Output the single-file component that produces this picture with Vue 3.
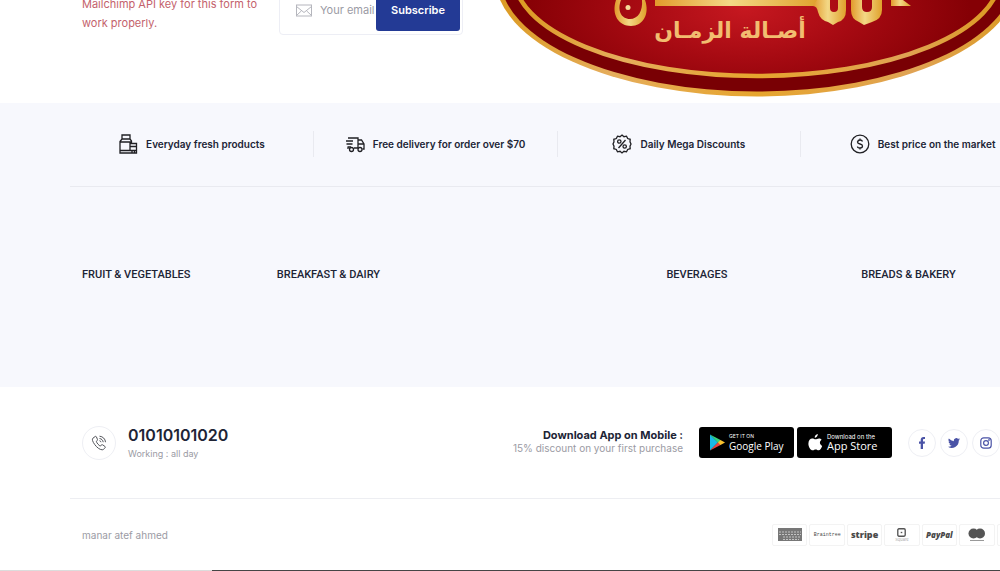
<template>
  <div class="page">
    <section class="newsletter">
      <div class="container newsletter__row">
        <p class="newsletter__error">Mailchimp API key for this form to work properly.</p>
        <form class="newsletter__form" @submit.prevent="subscribe">
          <svg class="newsletter__icon" viewBox="0 0 16 13" fill="none" stroke="#b5b6bd">
            <rect x="0.5" y="1" width="15" height="11" />
            <path d="M.5 2.5 8 8.5l7.500-6M.5 11.500 5.500 6.800M15.500 11.500l-5-4.700" />
          </svg>
          <input id="email" v-model="email" type="email" placeholder="Your email" aria-label="Your email" />
          <button type="submit">Subscribe</button>
        </form>
      </div>
      <svg class="logo" viewBox="0 0 524 97" role="img">
        <defs>
          <radialGradient id="red" gradientUnits="userSpaceOnUse" cx="250" cy="20" r="225" gradientTransform="matrix(1 0 0 .45 0 0)">
            <stop offset="0" stop-color="#c61820" />
            <stop offset="0.500" stop-color="#a60a12" />
            <stop offset="1" stop-color="#850005" />
          </radialGradient>
          <linearGradient id="rim" x1="0" x2="1">
            <stop offset="0" stop-color="#dc9a20" />
            <stop offset="0.220" stop-color="#e5ad5c" />
            <stop offset="0.500" stop-color="#e6a52e" />
            <stop offset="0.800" stop-color="#e0a354" />
            <stop offset="1" stop-color="#dc9a20" />
          </linearGradient>
          <linearGradient id="gold" x1="0" x2="1">
            <stop offset="0" stop-color="#e29a2c" />
            <stop offset="0.450" stop-color="#f3d886" />
            <stop offset="1" stop-color="#dfa02b" />
          </linearGradient>
        </defs>
        <ellipse cx="262" cy="-23.500" rx="262" ry="120" fill="url(#rim)" />
        <ellipse cx="262" cy="-23.500" rx="257" ry="115" fill="#790004" />
        <ellipse cx="262" cy="-23.500" rx="243" ry="99.500" fill="url(#red)" stroke="url(#rim)" stroke-width="4.500" />
        <path fill="url(#gold)" fill-rule="evenodd" d="M121 0c-5 15 3 26 15 26 12 0 19-12 14-26h-3c1 11-4 19-12 19-9 0-13-9-9-19z" />
        <circle cx="133" cy="7.500" r="2.500" fill="#f5d999" />
        <path fill="url(#gold)" d="M160 0v6h166v-6z" />
        <path fill="url(#gold)" d="M318 6 322 0h13v8q0 4 4 4t4-4V0h8v10q0 10-8 12l-5 3-5-3q-8-2-10-10-1-6-5-6z" />
        <path fill="url(#gold)" d="M356 0h11v7q0 5 5 5t5-5V0h10v10q0 9-10 12l-8 3-5-3q-8-3-8-12z" />
        <path fill="url(#gold)" d="M396 0h12l8 6h-20z" />
        <text x="235" y="38" direction="rtl" text-anchor="middle" fill="#f2bd70">أصـالة الزمـان</text>
      </svg>
    </section>

    <section class="catalog">
      <div class="container">
        <ul class="features">
          <li>
            <svg viewBox="0 0 20 20">
              <path d="M4 1h8v4H4zM4 5 2 7.500V19h16.500V9.500H12V17M12 5l1.500 2v2.500M2 8h11M2 16.500h16.500M12 12.500h6.500M14 17v2M16.500 17v2" />
            </svg>
            Everyday fresh products
          </li>
          <li>
            <svg viewBox="0 0 20 20">
              <path d="M3 4h10v10H9M13 6h3.500L19 10v5h-1.500M13 10h6M1 7h7M1.500 10h6M2.500 13H6M3 13v2" />
              <circle cx="6.500" cy="15.500" r="2" />
              <circle cx="15" cy="15.500" r="2" />
            </svg>
            Free delivery for order over $70
          </li>
          <li>
            <svg viewBox="0 0 20 20">
              <path d="M10 1l2 1.700 2.500-.5 1.200 2.300 2.500.8-.2 2.600L19 10l-1 2.100.2 2.600-2.500.8-1.200 2.300-2.500-.5L10 19l-2-1.700-2.500.5-1.200-2.300-2.500-.8.2-2.600L1 10l1-2.100-.2-2.600 2.500-.8 1.200-2.300 2.500.5zM13.500 6l-7 8" />
              <circle cx="7.300" cy="7.500" r="1.700" />
              <circle cx="12.700" cy="12.500" r="1.700" />
            </svg>
            Daily Mega Discounts
          </li>
          <li>
            <svg viewBox="0 0 20 20">
              <circle cx="10" cy="10" r="8.800" />
              <path d="M12.500 7.500Q12 6 10 6T7.500 8q0 1.500 2.500 2t2.500 2q0 2-2.500 2t-2.500-1.500M10 4.500V6m0 8v1.500" />
            </svg>
            Best price on the market
          </li>
        </ul>
        <div class="categories">
          <h6 v-for="(title, i) in categories" :key="i">{{ title }}</h6>
        </div>
      </div>
    </section>

    <footer class="container">
      <div class="contact">
        <div class="phone">
          <span class="circle circle--phone">
            <svg viewBox="0 0 16 16" fill="none" stroke="#52545a">
              <path d="M4.200 1.500 1.900 3.200C.8 4.200 1.500 6.500 3.700 9.500s5 5.200 7.500 5.300c1 0 2-.9 2.900-2 .4-.5.2-1-.2-1.400l-2.300-1.600c-.5-.3-1-.2-1.400.3l-.8 1c-1.500-.5-3.600-3-4.100-4.700l.9-.8c.5-.4.5-.8.2-1.300L5.400 1.800c-.3-.5-.7-.6-1.200-.3zM8.500 1.200c3.300.2 5.800 2.700 6 6M8.500 3.500c2 .2 3.500 1.700 3.700 3.700M8.500 5.700c.8.1 1.400.7 1.500 1.500" />
            </svg>
          </span>
          <div>
            <h4>01010101020</h4>
            <p>Working : all day</p>
          </div>
        </div>
        <div class="apps">
          <div class="apps__text">
            <h5>Download App on Mobile :</h5>
            <p>15% discount on your first purchase</p>
          </div>
          <div class="stores">
            <a href="#" class="store">
              <svg viewBox="0 0 16 17">
                <path fill="#18b9e6" d="M1 .5v16l8-8z" />
                <path fill="#35d07c" d="M1 .5 12 6.200 9 8.800z" />
                <path fill="#e9443f" d="M1 16.500 12 10.800 9 8.200z" />
                <path fill="#f9c22e" d="M11.500 5.900 16 8.500l-4.500 2.600-2.600-2.600z" />
              </svg>
              <span><small class="get">GET IT ON</small><b class="google">Google Play</b></span>
            </a>
            <a href="#" class="store">
              <svg viewBox="0 0 16 18" fill="#fff">
                <path d="M11 0c.1 2-1.400 3.900-3.300 4C7.400 2 9.200.2 11 0zM15 6.200c-2.700 1.700-2.200 5.200.6 6.400-.7 2-2.200 4.700-3.800 4.700-1.200 0-1.600-.8-3.100-.8s-2 .8-3.100.8C3.300 17.300 1 13.500 1 10.200c0-3.400 2-5.400 4.200-5.400 1.400 0 2.300.8 3.400.8s1.900-.9 3.700-.9c1 0 2.100.5 2.700 1.500z" />
              </svg>
              <span><small>Download on the</small><b>App Store</b></span>
            </a>
          </div>
          <div class="social">
            <a href="#" class="circle" aria-label="Facebook">
              <svg viewBox="0 0 12 12" fill="#4a53a6">
                <path d="M4.700 12V6.700H3V4.600h1.700V3c0-2 1.100-3 2.800-3L9 .1V2h-.9c-.9 0-1.100.5-1.100 1.100v1.500h2l-.3 2.100H7V12z" />
              </svg>
            </a>
            <a href="#" class="circle" aria-label="Twitter">
              <svg viewBox="0 0 24 24" fill="#4a53a6">
                <path d="M24 4.600a10 10 0 0 1-2.800.8 5 5 0 0 0 2.100-2.700 10 10 0 0 1-3.100 1.200 4.900 4.900 0 0 0-8.400 4.500A14 14 0 0 1 1.700 3.200a4.900 4.900 0 0 0 1.500 6.500 5 5 0 0 1-2.200-.6 4.900 4.900 0 0 0 4 4.900 5 5 0 0 1-2.300.1 4.900 4.900 0 0 0 4.600 3.400A10 10 0 0 1 0 19.500a14 14 0 0 0 21.500-12.400A10 10 0 0 0 24 4.600z" />
              </svg>
            </a>
            <a href="#" class="circle" aria-label="Instagram">
              <svg viewBox="0 0 12 12" fill="none" stroke="#4a53a6" stroke-width="1.200">
                <rect x="0.800" y="0.800" width="10.400" height="10.400" rx="3" />
                <circle cx="6" cy="6" r="2.400" />
                <circle cx="9" cy="3" r="0.300" />
              </svg>
            </a>
          </div>
        </div>
      </div>
      <div class="bottom">
        <p>manar atef ahmed</p>
        <div class="payments">
          <span>
            <svg viewBox="0 0 24 14">
              <path fill="#777" d="M0 0h24v13H0z" />
              <path stroke="#c4c4c4" fill="none" stroke-dasharray="2 1" d="M1 4h22M1 6.500h22M5 9h18M5 11.500h16" />
            </svg>
          </span>
          <span class="braintree">Braintree</span>
          <span class="stripe">stripe</span>
          <span class="square">
            <svg viewBox="0 0 8 8" fill="none" stroke="#555" stroke-width="1.200">
              <rect x="0.700" y="0.700" width="6.600" height="6.600" rx="1" />
              <path d="M3.300 4h1.400" />
            </svg>
            Square
          </span>
          <span class="paypal">PayPal</span>
          <span>
            <svg viewBox="0 0 18 14" fill="#555">
              <circle cx="5.500" cy="5.500" r="5" />
              <circle cx="12" cy="5.500" r="5" />
              <path fill="#999" d="M2 12h14v1H2z" />
            </svg>
          </span>
          <span></span>
        </div>
      </div>
    </footer>
    <div class="edge"></div>
  </div>
</template>

<script setup>
import { ref } from 'vue';

const email = ref('');
const categories = ['Fruit & Vegetables', 'Breakfast & Dairy', '', 'Beverages', 'Breads & Bakery'];

const subscribe = () => {
  email.value = '';
};
</script>

<style>
body {
  margin: 0;
  background: #fff;
}
</style>

<style scoped>
.page {
  overflow: hidden;
  font-family: Inter, "Liberation Sans", sans-serif;
  font-size: 11px;
  color: #202435;
}

.page * {
  box-sizing: border-box;
}

h4, h5, h6, p, ul {
  margin: 0;
  padding: 0;
}

a {
  text-decoration: none;
}

.container {
  margin-left: 70px;
  margin-right: -44px;
}

.newsletter {
  position: relative;
  height: 103px;
  overflow: hidden;
}

.newsletter__row {
  display: flex;
  align-items: flex-end;
  height: 100%;
  padding: 0 12px 68px;
}

.newsletter__error {
  width: 197px;
  padding: 0 10px 2px 0;
  font-size: 11px;
  line-height: 19px;
  color: #c4626c;
}

.newsletter__form {
  display: flex;
  align-items: center;
  width: 184px;
  height: 50px;
  padding: 0 2px 0 16px;
  border: 1px solid #edeef5;
  border-radius: 4px;
}

.newsletter__icon {
  flex: none;
  width: 16px;
  height: 13px;
}

.newsletter__form input {
  flex: 1;
  min-width: 0;
  height: 40px;
  padding: 0 0 0 8px;
  border: 0;
  outline: 0;
  background: none;
  font: 11px Inter, sans-serif;
}

.newsletter__form input::placeholder {
  color: #9b9ba4;
}

.newsletter__form button {
  width: 84px;
  height: 42px;
  padding: 0;
  border: 0;
  border-radius: 3px;
  background: #233a95;
  color: #fff;
  font: 600 11px Inter, sans-serif;
}

.logo {
  position: absolute;
  top: 0;
  left: 495px;
  width: 524px;
  height: 97px;
}

.logo text {
  font: bold 22px "DejaVu Sans", sans-serif;
}

.catalog {
  background: #f7f8fd;
}

.features {
  display: flex;
  align-items: center;
  height: 84px;
  padding-bottom: 2px;
  border-bottom: 1px solid #e9eaf0;
  list-style: none;
}

.features li {
  flex: 1;
  display: flex;
  align-items: center;
  justify-content: center;
  gap: 8px;
  height: 26px;
  font-size: 10px;
  font-weight: 600;
  white-space: nowrap;
}

.features li + li {
  border-left: 1px solid #e9eaf0;
}

.features svg {
  width: 20px;
  height: 20px;
  fill: none;
  stroke: #202024;
  stroke-width: 1.3;
}

.categories {
  display: grid;
  grid-template-columns: repeat(5, 1fr);
  padding: 80px 0 104px;
}

.categories h6 {
  padding-left: 12px;
  font: 500 11px/16px Roboto, sans-serif;
  text-transform: uppercase;
}

.contact {
  display: flex;
  align-items: center;
  justify-content: space-between;
  height: 112px;
  padding: 0 44px 0 12px;
  border-bottom: 1px solid #edeef2;
}

.phone,
.apps,
.stores,
.social {
  display: flex;
  align-items: center;
}

.phone {
  gap: 12px;
}

.contact p {
  color: #9b9ba4;
}

.phone h4 {
  font-size: 16px;
  font-weight: 600;
  line-height: 22px;
}

.phone p {
  font-size: 9px;
  line-height: 16px;
}

.circle {
  display: flex;
  align-items: center;
  justify-content: center;
  width: 28px;
  height: 28px;
  border: 1px solid #eeeff4;
  border-radius: 50%;
}

.circle svg {
  width: 12px;
  height: 12px;
}

.circle--phone {
  width: 34px;
  height: 34px;
}

.circle--phone svg {
  width: 16px;
  height: 16px;
}

.apps {
  gap: 16px;
}

.apps__text {
  padding-bottom: 3px;
  text-align: right;
}

.apps__text h5 {
  font-size: 11px;
  font-weight: 700;
  line-height: 14px;
}

.apps__text p {
  font-size: 10px;
  line-height: 12px;
}

.stores {
  gap: 3px;
}

.store {
  display: flex;
  align-items: center;
  gap: 4px;
  width: 95px;
  height: 31px;
  padding-left: 10px;
  border-radius: 3px;
  background: #000;
  color: #fff;
}

.store svg {
  flex: none;
  width: 16px;
  height: 17px;
}

.store small,
.store b {
  display: block;
  white-space: nowrap;
}

.store small {
  font-size: 6px;
  line-height: 7px;
}

.store .get {
  font-size: 5px;
}

.store b {
  font: 500 11px/12px "Open Sans", sans-serif;
}

.store .google {
  font-size: 10px;
}

.social {
  gap: 4px;
}

.bottom {
  display: flex;
  align-items: center;
  justify-content: space-between;
  height: 71px;
  padding: 0 12px;
}

.bottom p {
  font-size: 10px;
  color: #9b9ba4;
}

.payments {
  display: flex;
  gap: 2px;
  width: 260px;
}

.payments span {
  flex: 1;
  display: flex;
  flex-direction: column;
  align-items: center;
  justify-content: center;
  min-width: 0;
  height: 22px;
  border: 1px solid #f3f3f3;
  border-radius: 2px;
  color: #4a4a4a;
}

.payments svg {
  width: 24px;
  height: 14px;
}

.payments .braintree {
  font: 5px "Liberation Mono", monospace;
}

.payments .stripe {
  font: 800 9px "Open Sans", sans-serif;
}

.payments .square {
  font-size: 4px;
  color: #aaa;
}

.payments .square svg {
  width: 9px;
  height: 9px;
}

.payments .paypal {
  font: italic 800 8px "Open Sans", sans-serif;
}

.edge {
  height: 2px;
  background: linear-gradient(to right, #dcdcdc 21.2%, #454545 21.2%);
}
</style>
